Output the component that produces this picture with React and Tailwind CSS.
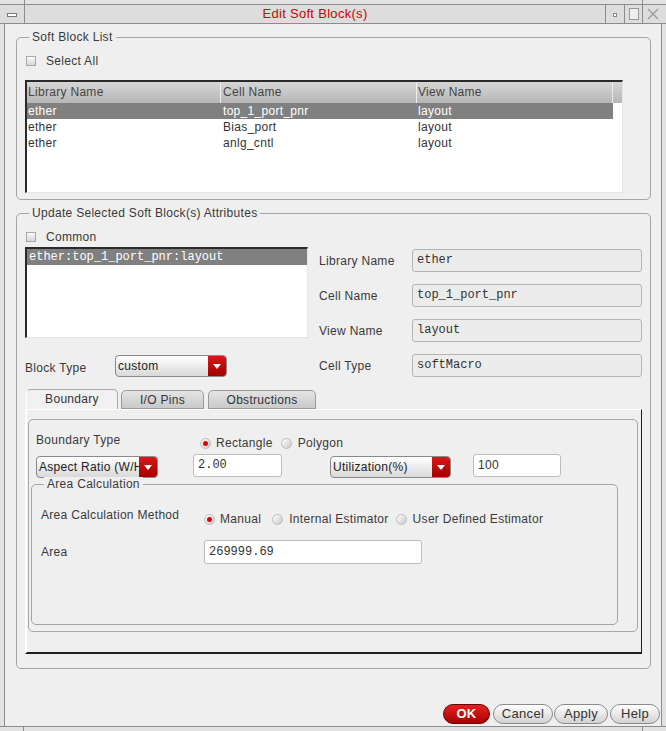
import React from 'react';

const mono = "font-['Liberation_Mono','DejaVu_Sans_Mono',monospace] tracking-normal";

function CheckBox() {
  return <span className="w-[10px] h-[10px] border border-[#a8a8a8] bg-linear-to-b from-[#fbfbfb] to-[#d6d6d6]" />;
}

function Radio({ on }) {
  return (
    <span className="w-[11px] h-[11px] rounded-full border border-[#bdbdbd] bg-linear-to-br from-white to-[#c9c9c9] flex items-center justify-center shrink-0">
      {on && <span className="w-[5px] h-[5px] rounded-full bg-[#e00000]" />}
    </span>
  );
}

function Dropdown({ text, className }) {
  return (
    <div className={`flex h-[22px] rounded-[4px] border border-[#8a8a8a] overflow-hidden bg-linear-to-b from-white to-[#d9d9d9] ${className}`}>
      <span className="flex-1 min-w-0 overflow-hidden whitespace-nowrap pl-[2px] leading-[20px] text-[#222]">{text}</span>
      <span className="w-[18px] shrink-0 bg-linear-to-b from-[#d81818] to-[#a40000] flex items-center justify-center">
        <svg width="8" height="5" viewBox="0 0 8 5"><path d="M0 0h8L4 5z" fill="#fff" /></svg>
      </span>
    </div>
  );
}

function Group({ label, className, children }) {
  return (
    <div className={`relative border border-[#a4a4a4] rounded-[5px] flex flex-col ${className}`}>
      <span className="absolute left-[12px] top-[-8px] px-[3px] bg-[#efefef] leading-[14px] text-[#3a3a3a]">{label}</span>
      {children}
    </div>
  );
}

function Field({ label, value }) {
  return (
    <div className="flex items-center h-[23px]">
      <span className="w-[93px] text-[#3a3a3a]">{label}</span>
      <span className={`w-[230px] h-[23px] rounded-[3px] border border-[#b4b4b4] bg-[#ececec] pl-[4px] leading-[21px] text-[#333] ${mono}`}>{value}</span>
    </div>
  );
}

const rows = [
  ['ether', 'top_1_port_pnr', 'layout'],
  ['ether', 'Bias_port', 'layout'],
  ['ether', 'anlg_cntl', 'layout'],
];

export default function App() {
  return (
    <div className="w-[666px] h-[731px] bg-[#dadada] flex flex-col overflow-hidden font-['Liberation_Sans',Arial,sans-serif] text-[12px] tracking-[0.3px] text-[#333]">
      {/* window manager frame */}
      <div className="h-[5px] flex border-b border-[#8c8c8c] bg-[#e2e2e2]">
        <span className="w-[25px] border-r border-[#8c8c8c]" />
        <span className="flex-1" />
        <span className="w-[24px] border-l border-[#8c8c8c]" />
      </div>
      <div className="h-[19px] flex border-b border-[#8c8c8c] bg-[#dddddd]">
        <span className="w-[25px] border-r border-[#8c8c8c] flex items-center justify-center">
          <span className="w-[10px] h-[4px] border border-[#777] bg-white mt-[2px]" />
        </span>
        <span className="flex-1 text-center text-[13px] leading-[18px] text-[#d00000]">Edit Soft Block(s)</span>
        <span className="w-[19px] border-l border-[#8c8c8c] flex items-center justify-center">
          <span className="w-[4px] h-[4px] border border-[#888] bg-white mt-[2px]" />
        </span>
        <span className="w-[18px] border-l border-[#8c8c8c] flex items-center justify-center">
          <span className="w-[10px] h-[12px] border border-[#999] bg-[#eee]" />
        </span>
        <span className="w-[20px] border-l border-[#8c8c8c] flex items-center justify-center">
          <svg width="12" height="12" viewBox="0 0 12 12"><path d="M1 1l10 10M11 1L1 11" stroke="#999" strokeWidth="1.2" fill="none" /></svg>
        </span>
        <span className="w-[4px]" />
      </div>

      <div className="flex-1 flex">
        <div className="w-[5px] border-r border-[#8c8c8c] bg-[#e2e2e2]" />
        <div className="w-[656px] bg-[#efefef] flex flex-col">
          {/* Soft Block List */}
          <Group label="Soft Block List" className="mt-[13px] ml-[11px] w-[635px] h-[163px]">
            <div className="mt-[16px] h-[14px] flex items-center pl-[9px] gap-[10px]">
              <CheckBox />
              <span className="text-[#3a3a3a]">Select All</span>
            </div>
            <div className="mt-[12px] ml-[8px] w-[598px] h-[113px] bg-white border-t-2 border-l-2 border-t-[#2a2a2a] border-l-[#2a2a2a] border-r border-b border-r-[#e6e6e6] border-b-[#e6e6e6] flex flex-col">
              <div className="h-[21px] flex bg-linear-to-b from-[#d6d6d6] to-[#b6b6b6] text-[#444] leading-[21px]">
                <span className="w-[194px] pl-[1px] border-r border-[#ededed]">Library Name</span>
                <span className="w-[196px] pl-[2px] border-r border-[#ededed]">Cell Name</span>
                <span className="w-[196px] pl-[1px] border-r border-[#ededed]">View Name</span>
                <span className="flex-1" />
              </div>
              {rows.map((r, i) => (
                <div key={i} className="h-[16px] flex leading-[16px]">
                  <div className={`w-[586px] flex ${i === 0 ? 'bg-[#808080] text-white' : 'text-[#333]'}`}>
                    <span className="w-[194px] pl-[1px]">{r[0]}</span>
                    <span className="w-[196px] pl-[2px]">{r[1]}</span>
                    <span className="w-[196px] pl-[1px]">{r[2]}</span>
                  </div>
                </div>
              ))}
            </div>
          </Group>

          {/* Update attributes */}
          <Group label="Update Selected Soft Block(s) Attributes" className="mt-[13px] ml-[11px] w-[635px] h-[456px]">
            <div className="mt-[16px] h-[14px] flex items-center pl-[9px] gap-[10px]">
              <CheckBox />
              <span className="text-[#3a3a3a]">Common</span>
            </div>
            <div className="mt-[3px] flex">
              <div className="ml-[8px] w-[283px] flex flex-col">
                <div className="h-[91px] bg-white border-t-2 border-l-2 border-t-[#2a2a2a] border-l-[#2a2a2a] border-r border-b border-r-[#e6e6e6] border-b-[#e6e6e6]">
                  <div className={`h-[16px] bg-[#808080] text-white pl-[2px] leading-[16px] ${mono}`}>ether:top_1_port_pnr:layout</div>
                </div>
                <div className="mt-[17px] h-[22px] flex items-center">
                  <span className="w-[90px] text-[#3a3a3a] mt-[3px]">Block Type</span>
                  <Dropdown text="custom" className="w-[112px]" />
                </div>
              </div>
              <div className="ml-[11px] pt-[2px] flex flex-col gap-[12px]">
                <Field label="Library Name" value="ether" />
                <Field label="Cell Name" value="top_1_port_pnr" />
                <Field label="View Name" value="layout" />
                <Field label="Cell Type" value="softMacro" />
              </div>
            </div>

            {/* tabs */}
            <div className="mt-[12px] ml-[9px] h-[20px] flex items-end text-[#333]">
              <span className="w-[92px] h-[20px] rounded-t-[5px] border-t border-l border-r border-t-[#a8a8a8] border-r-[#a8a8a8] border-l-white bg-[#f1f1f1] text-center leading-[19px]">Boundary</span>
              <span className="ml-[3px] w-[83px] h-[19px] rounded-t-[5px] border border-[#9a9a9a] bg-linear-to-b from-[#e4e4e4] to-[#c9c9c9] text-center leading-[18px]">I/O Pins</span>
              <span className="ml-[4px] w-[108px] h-[19px] rounded-t-[5px] border border-[#9a9a9a] bg-linear-to-b from-[#e4e4e4] to-[#c9c9c9] text-center leading-[18px]">Obstructions</span>
            </div>
            <div className="ml-[8px] w-[617px] h-[245px] border-t border-l-2 border-t-white border-l-white border-r border-b-2 border-r-[#1e1e1e] border-b-[#1e1e1e] flex flex-col">
              <div className="ml-[1px] mt-[9px] w-[610px] h-[213px] border border-[#a8a8a8] rounded-[5px] flex flex-col">
                <div className="mt-[13px] flex items-start">
                  <span className="ml-[7px] w-[164px] leading-[14px] text-[#3a3a3a]">Boundary Type</span>
                  <div className="mt-[3px] h-[14px] flex items-center">
                    <Radio on />
                    <span className="ml-[5px] text-[#3a3a3a]">Rectangle</span>
                    <span className="ml-[8px]"><Radio /></span>
                    <span className="ml-[6px] text-[#3a3a3a]">Polygon</span>
                  </div>
                </div>
                <div className="mt-[4px] flex items-start">
                  <Dropdown text="Aspect Ratio (W/H)" className="ml-[7px] mt-[2px] w-[122px]" />
                  <span className={`ml-[35px] w-[89px] h-[23px] rounded-[3px] border border-[#bdbdbd] bg-white pl-[4px] leading-[21px] text-[#333] ${mono}`}>2.00</span>
                  <Dropdown text="Utilization(%)" className="ml-[48px] mt-[2px] w-[121px]" />
                  <span className="ml-[22px] w-[88px] h-[23px] rounded-[3px] border border-[#bdbdbd] bg-white pl-[4px] leading-[21px] text-[#333]">100</span>
                </div>

                <Group label="Area Calculation" className="mt-[6px] ml-[2px] w-[587px] h-[141px]">
                  <div className="mt-[23px] flex items-start">
                    <span className="ml-[9px] w-[163px] leading-[14px] text-[#3a3a3a]">Area Calculation Method</span>
                    <div className="mt-[4px] h-[14px] flex items-center text-[#3a3a3a]">
                      <Radio on />
                      <span className="ml-[5px]">Manual</span>
                      <span className="ml-[11px]"><Radio /></span>
                      <span className="ml-[6px]">Internal Estimator</span>
                      <span className="ml-[7px]"><Radio /></span>
                      <span className="ml-[6px]">User Defined Estimator</span>
                    </div>
                  </div>
                  <div className="mt-[14px] h-[24px] flex items-center">
                    <span className="ml-[9px] w-[163px] text-[#3a3a3a]">Area</span>
                    <span className={`w-[218px] h-[24px] rounded-[3px] border border-[#bdbdbd] bg-white pl-[4px] leading-[22px] text-[#333] ${mono}`}>269999.69</span>
                  </div>
                </Group>
              </div>
            </div>
          </Group>

          {/* dialog buttons */}
          <div className="mt-[35px] ml-[438px] h-[20px] flex text-[13px]">
            <button className="w-[47px] h-[20px] rounded-full border border-[#6a0000] bg-linear-to-b from-[#e42020] to-[#a80000] text-white font-bold leading-[18px]">OK</button>
            <button className="ml-[3px] w-[60px] h-[20px] rounded-full border border-[#8a8a8a] bg-linear-to-b from-white to-[#d2d2d2] text-[#333] leading-[18px]">Cancel</button>
            <button className="ml-[1px] w-[54px] h-[20px] rounded-full border border-[#8a8a8a] bg-linear-to-b from-white to-[#d2d2d2] text-[#333] leading-[18px]">Apply</button>
            <button className="ml-[2px] w-[50px] h-[20px] rounded-full border border-[#8a8a8a] bg-linear-to-b from-white to-[#d2d2d2] text-[#333] leading-[18px]">Help</button>
          </div>
        </div>
        <div className="w-[5px] border-l border-[#8c8c8c] bg-[#e2e2e2]" />
      </div>
      <div className="h-[5px] flex border-t border-[#8c8c8c] bg-[#e2e2e2]">
        <span className="w-[24px] border-r border-[#8c8c8c]" />
        <span className="flex-1" />
        <span className="w-[24px] border-l border-[#8c8c8c]" />
      </div>
    </div>
  );
}
